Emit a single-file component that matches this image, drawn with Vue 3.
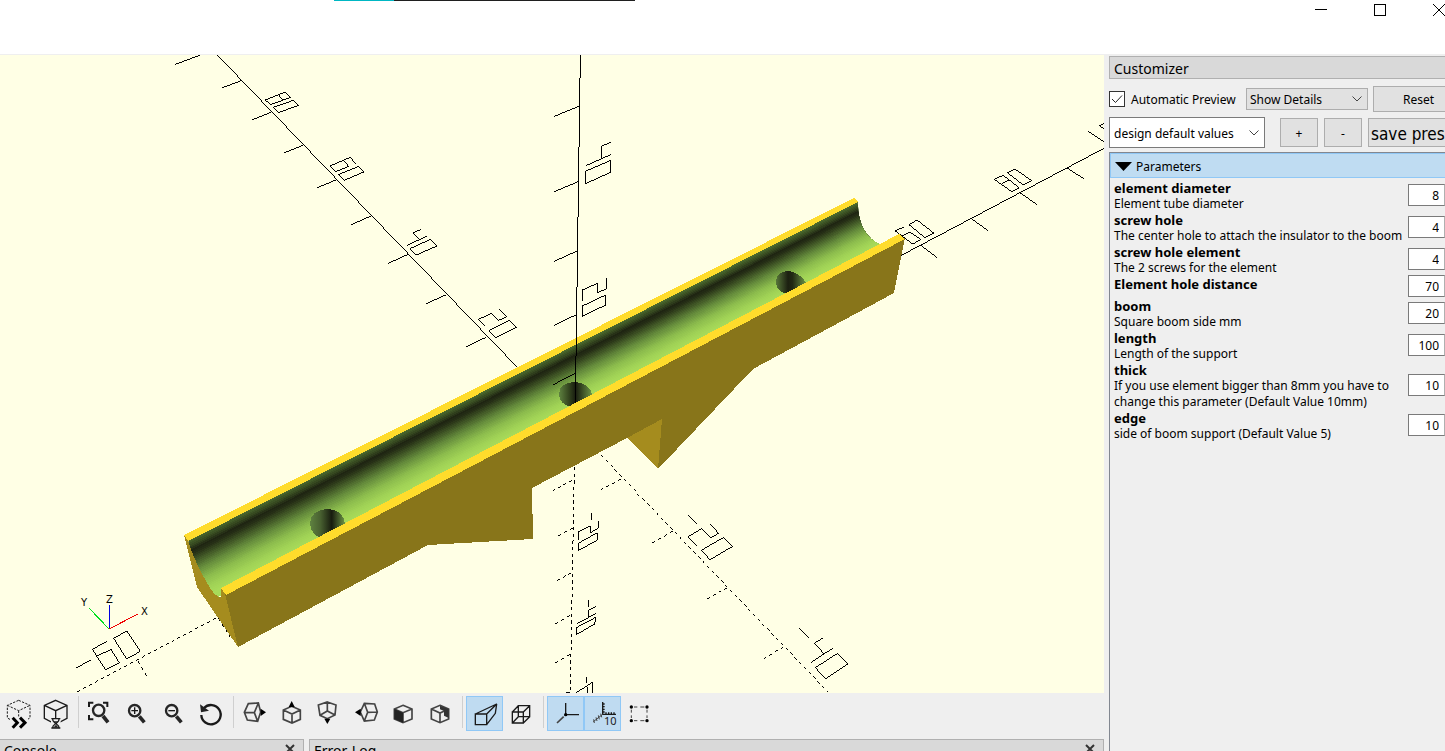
<script setup>
import { ref } from 'vue'

const autoPreview = ref(true)

const params = ref([
  { id: 'diameter', name: 'element diameter', text: 'Element tube diameter', value: 8 },
  { id: 'screw', name: 'screw hole', text: 'The center hole to attach the insulator to the boom', value: 4 },
  { id: 'screwel', name: 'screw hole element', text: 'The 2 screws for the element', value: 4 },
  { id: 'distance', name: 'Element hole distance', text: '', value: 70 },
  { id: 'boom', name: 'boom', text: 'Square boom side mm', value: 20 },
  { id: 'length', name: 'length', text: 'Length of the support', value: 100 },
  { id: 'thick', name: 'thick', text: 'If you use element bigger than 8mm you have to\nchange this parameter (Default Value 10mm)', value: 10 },
  { id: 'edge', name: 'edge', text: 'side of boom support (Default Value 5)', value: 10 },
])

// Shading of the groove: colour stops across its width, drawn as narrow facets
const stops = [
  [0, 78, 110, 47], [0.1, 54, 73, 32], [0.18, 31, 37, 18], [0.24, 38, 48, 22],
  [0.5, 99, 137, 59], [0.7, 140, 188, 77], [0.87, 161, 211, 86], [1, 169, 220, 91],
]
function shade(t) {
  let i = 1
  while (i < stops.length - 1 && stops[i][0] < t) i++
  const a = stops[i - 1]
  const b = stops[i]
  const k = (t - a[0]) / (b[0] - a[0])
  return `rgb(${[1, 2, 3].map((n) => Math.round(a[n] + (b[n] - a[n]) * k)).join(',')})`
}
const far = (x) => 540 - ((x - 188) * 338) / 670
const near = (x) => 589 - ((x - 221) * 355) / 679
const FACETS = 36
const facets = Array.from({ length: FACETS }, (_, i) => {
  const t = i / FACETS
  const at = (x, u) => `${x},${(far(x) + (near(x) - far(x)) * u).toFixed(1)}`
  return { points: `${at(170, t)} ${at(920, t)} ${at(920, 1.1)} ${at(170, 1.1)}`, fill: shade(t + 0.5 / FACETS) }
})
</script>

<template>
  <div class="window">
    <header class="titlebar">
      <div class="progress"><i class="done"></i><i class="rest"></i></div>
      <div class="controls">
        <button aria-label="Minimize"><svg viewBox="0 0 12 12"><path d="M0 5.5H12" /></svg></button>
        <button aria-label="Maximize"><svg viewBox="0 0 12 12"><path d="M.5 .5H11.5V11.5H.5Z" /></svg></button>
        <button aria-label="Close"><svg viewBox="0 0 12 12"><path d="M0 0L12 12M12 0L0 12" /></svg></button>
      </div>
    </header>

    <div class="body">
      <main class="left">
        <div class="viewport">
          <svg class="scene" viewBox="0 55 1104 638" preserveAspectRatio="xMinYMin slice" shape-rendering="crispEdges">
            <defs>
              <clipPath id="groove">
                <path d="M188 540L858 201C857 222 865 238 881 245L905 240L226 592L221 597C209 595 197 575 188 540Z" />
              </clipPath>
              <linearGradient id="holeL"><stop offset="0" stop-color="#5f8240" /><stop offset=".3" stop-color="#486030" /><stop offset=".62" stop-color="#181c0f" /><stop offset="1" stop-color="#6d9545" /></linearGradient>
              <linearGradient id="holeM"><stop offset="0" stop-color="#5f8240" /><stop offset=".3" stop-color="#34451f" /><stop offset=".5" stop-color="#181c0f" /><stop offset="1" stop-color="#6d9545" /></linearGradient>
              <linearGradient id="holeR"><stop offset="0" stop-color="#577639" /><stop offset=".4" stop-color="#1c2011" /><stop offset=".55" stop-color="#222a14" /><stop offset="1" stop-color="#6d9545" /></linearGradient>
            </defs>

            <g class="ink">
              <g transform="translate(170 50) scale(.33333)">
                <path d="M142 15L1041 951" />
                <path d="M16 43L89 16M157 113L214 92M247 209L303 187M343 308L399 286M442 413L500 389M544 524L603 498M655 640L714 613M769 761L829 734M889 890L948 862" />
                <path d="M286 150L346 126L362 142L302 164ZM324 133L340 151M310 172L370 151L386 166L325 188Z" />
                <path d="M556 341L541 322L480 348L497 365L536 349L520 331M505 374L566 349L581 366L523 391Z" />
                <path d="M753 538L730 549L749 568M711 586L770 559M720 596L781 568L801 588L739 615Z" />
                <path d="M945 827L926 808L964 790L986 811L1010 800L988 777M956 842L1019 811L1040 832L977 863Z" />
              </g>
              <g transform="translate(740 100) scale(.33333)">
                <path d="M484 466L1092 145" />
                <path d="M543 436L590 472M694 356L743 391M840 278L890 313M980 203L1031 236M1045 94L1092 126M1095 70L1078 77L1095 88" />
                <path d="M491 381L466 393L518 432L543 419L510 396L485 408M507 374L531 360L581 399L555 413Z" />
                <path d="M763 238L789 226L838 263L815 275ZM787 250L807 240M802 218L825 207L875 242L850 255Z" />
              </g>
              <g transform="translate(0 480) scale(.33333)">
                <path class="dash" d="M232 635L652 412M414 544L445 595M655 415L690 470" />
                <path d="M229 563L272 541M321 484L277 508L317 570L358 548L333 508L290 529M341 475L380 453L421 514L380 537Z" />
              </g>
              <g transform="translate(500 400) scale(.33333)">
                <path class="dash" d="M303 165L985 877" />
                <path class="dash" d="M223 201L211 877" />
                <path class="dash" d="M362 238L303 269M518 394L454 431M682 563L615 600M850 740L783 782M217 241L160 271M220 384L169 410M214 518L166 545M209 647L163 674M209 763L163 791M199 877H211" />
                <path d="M274 339V361M235 420V396L271 377V398L295 385V364M235 430L292 398V420L235 452Z" />
                <path d="M265 600V620M287 620L266 631V652M231 671L287 641M229 683L287 652L284 672L229 704Z" />
                <path d="M259 831V849M229 878L277 847V880M262 860V880" />
                <path d="M565 346L590 371M590 437L564 410L605 386L632 413L656 400L631 373M604 451L671 412L698 439L630 479Z" />
                <path d="M898 685L926 713M969 714L943 730L973 762M932 788L998 745M946 803L1013 760L1043 792L977 836Z" />
              </g>
            </g>

            <g clip-path="url(#groove)">
              <polygon v-for="(f, i) in facets" :key="i" :points="f.points" :fill="f.fill" />
            </g>
            <path fill="url(#holeL)" d="M310 523C310 514 318 509 328 509C338 509 345 516 345 524L325 540C316 537 310 532 310 523Z" />
            <path fill="url(#holeM)" d="M559 394C559 386 566 382 575 382C585 382 592 389 592 395L574 408C564 406 559 401 559 394Z" />
            <path fill="url(#holeR)" d="M776 282C776 275 781 271 788 271C795 271 803 277 806 283L788 294C781 293 776 289 776 282Z" />
            <path fill="#a58c1e" d="M184 535L197 587L238 647L226 594L221 588V597C217 597 214 594 210 588C201 573 192 555 188 540Z" />
            <path fill="#88751a" d="M225 594L905 238L894 293L753 369L658 469L640 440L627 438L532 488L533 539L428 545L238 647Z" />
            <path fill="#a58c1e" d="M627 438L662 419L658 469Z" />
            <path fill="#ffdc2c" d="M184 535L854 198L858 202L188 541Z" />
            <path fill="#ffdc2c" d="M221 588L899 234L905 239L226 595Z" />

            <g class="ink" transform="translate(530 50) scale(.33333)">
              <path d="M151 15L136 1058" />
              <path d="M73 199L151 167M73 425L147 394M73 634L143 602M73 826L139 794M70 1004L136 970" />
              <path d="M242 277L214 289V324M168 347L242 314M166 364L242 331V367L166 401Z" />
              <path d="M157 752V720L202 700V728L229 717V685M157 768L227 735V765L157 799Z" />
            </g>

            <g class="gizmo">
              <path stroke="#0000e0" d="M109.500 605V629" />
              <path stroke="#00e020" d="M89 608L109 629" />
              <path stroke="#f00000" d="M109 629L138 614" />
            </g>
            <g class="axis">
              <text x="81" y="606">Y</text>
              <text x="106" y="603">Z</text>
              <text x="141" y="615">X</text>
            </g>
          </svg>
        </div>

        <div class="toolbar" role="toolbar">
          <button aria-label="Preview"><svg viewBox="3 18 111 105">
            <path class="dot" d="M56 31L90 46V84L56 102L22 84V46ZM22 46L56 62L90 46M56 62V102" />
            <path fill="#efefef" stroke="none" d="M32 80H84V116H32Z" />
            <path class="chev" d="M38 83L52 98L38 113M60 83L75 98L60 113" />
          </svg></button>
          <button aria-label="Render"><svg viewBox="114 18 111 105">
            <path class="st" d="M167 31L201 46V85L167 103L133 85V46ZM133 46L167 62L201 46M167 62V86" />
            <path fill="#efefef" stroke="none" d="M153 84H182V116H153Z" />
            <path class="st" d="M154 86H181M154 114H181M158 88C158 98 166 97 166 101C166 105 158 104 158 113M177 88C177 98 169 97 169 101C169 105 177 104 177 113" />
            <path fill="#222" d="M159 94H176L168 100ZM160 113L168 104L176 113Z" />
          </svg></button>
          <span class="sep"></span>
          <button aria-label="View all"><svg viewBox="246 18 111 105">
            <path class="mid" d="M267 51V38H280M309 38H322V51M267 75V88H280" />
            <circle class="lens" cx="296" cy="61" r="17" /><path class="handle" d="M309 78L324 97" />
          </svg></button>
          <button aria-label="Zoom in"><svg viewBox="357 18 111 105">
            <circle class="lens" cx="404" cy="62" r="17" /><path class="handle" d="M418 79L433 97" />
            <path class="st" d="M394 62H414M404 52V72" />
          </svg></button>
          <button aria-label="Zoom out"><svg viewBox="468 18 111 105">
            <circle class="lens" cx="515" cy="62" r="17" /><path class="handle" d="M529 79L544 97" />
            <path class="st" d="M505 62H525" />
          </svg></button>
          <button aria-label="Reset view"><svg viewBox="579 18 111 105">
            <path class="arc" d="M612 54A29 29 0 1 1 604 75" /><path fill="#222" d="M600 43L603 67L627 62Z" />
          </svg></button>
          <span class="sep"></span>
          <button aria-label="Right"><svg viewBox="711 18 111 105">
            <path class="soft" d="M745 41L775 39L782 66L773 94L742 90L733 67ZM733 67L763 68L775 39M763 68L773 94" /><path d="M782 56L798 67L782 78Z" />
          </svg></button>
          <button aria-label="Top"><svg viewBox="822 18 111 105">
            <path class="soft" d="M875 49L901 60V88L876 99L850 88V60ZM850 60L876 72L901 60M876 72V99" /><path d="M875 33L884 51H866Z" />
          </svg></button>
          <button aria-label="Bottom"><svg viewBox="-27 18 111 105">
            <path class="soft" d="M22 36L48 45L45 75L22 86L0 76L-5 45ZM0 76L22 63L45 75M22 63V36" /><path d="M13 86H31L22 102Z" />
          </svg></button>
          <button aria-label="Left"><svg viewBox="84 18 111 105">
            <path class="soft" d="M133 40L164 42L172 66L163 90L133 93L121 66ZM133 40L143 67L133 93M143 67L172 66" /><path d="M105 67L122 56V78Z" />
          </svg></button>
          <button aria-label="Front"><svg viewBox="195 18 111 105">
            <path class="soft" d="M249 46L276 57V87L249 98L223 87V57ZM223 57L249 68L276 57M249 68V98" /><path fill="#222" d="M223 57L249 68V98L223 87Z" />
          </svg></button>
          <button aria-label="Back"><svg viewBox="306 18 111 105">
            <path class="soft" d="M360 46L386 57V87L360 98L334 87V57ZM334 57L360 69L386 57M360 69V98" /><path fill="#333" d="M360 47L386 57V84L372 77V63L360 58Z" />
          </svg></button>
          <span class="sep"></span>
          <button class="on" aria-label="Perspective" aria-pressed="true"><svg viewBox="438 18 111 105">
            <path class="st" d="M466 72H500V104H466ZM466 72L530 42L500 72M500 104L526 70L530 42" />
          </svg></button>
          <button aria-label="Orthogonal"><svg viewBox="549 18 111 105">
            <path class="st" d="M577 66H610V99H577ZM595 47H629V80H595ZM577 66L595 47M610 66L629 47M577 99L595 80M610 99L629 80" />
          </svg></button>
          <span class="sep"></span>
          <button class="on" aria-label="Show axes" aria-pressed="true"><svg viewBox="681 18 111 105">
            <path class="st" d="M737 74V39M737 74H777" /><path class="soft" d="M731 80L711 99" /><circle cx="737" cy="74" r="5" />
          </svg></button>
          <button class="on" aria-label="Show scale markers" aria-pressed="true"><svg viewBox="792 18 111 105">
            <path class="st" d="M848 36V73H888M848 42H854M848 50H854M848 58H854M848 66H854M858 73V67M866 73V67M874 73V67M882 73V67" />
            <path class="fine" d="M848 73L820 95M842 71L845 82M835 76L838 88M828 82L831 93M821 88L823 99" />
            <text x="852" y="105" font-size="33">10</text>
          </svg></button>
          <button aria-label="Show edges"><svg viewBox="903 18 111 105">
            <path class="fine" d="M942 51H952M961 51H973M942 92H952M961 92H973M934 59V68M934 76V84M981 59V68M981 76V84" />
            <circle cx="934" cy="51" r="5" /><circle cx="981" cy="51" r="5" /><circle cx="934" cy="92" r="5" /><circle cx="981" cy="92" r="5" />
          </svg></button>
        </div>

        <div class="docks">
          <section class="dock console"><h2>Console</h2>
            <button aria-label="Close console"><svg viewBox="0 0 10 10"><path d="M1 1L9 9M9 1L1 9" /></svg></button></section>
          <section class="dock errors"><h2>Error-Log</h2>
            <button aria-label="Close error log"><svg viewBox="0 0 10 10"><path d="M1 1L9 9M9 1L1 9" /></svg></button></section>
        </div>
      </main>

      <aside class="customizer">
        <h2 class="title">Customizer</h2>
        <div class="row one">
          <label class="auto">
            <input v-model="autoPreview" type="checkbox" />
            <svg class="tick" viewBox="0 0 16 16"><path d="M3 8L6.500 11.500L13 4.500" /></svg>
            <span>Automatic Preview</span>
          </label>
          <div class="combo details">
            <select aria-label="Detail level"><option>Show Details</option></select>
            <svg viewBox="0 0 10 6"><path d="M.5 .5L5 5L9.500 .5" /></svg>
          </div>
          <button class="btn reset">Reset</button>
        </div>
        <div class="row two">
          <div class="combo preset">
            <select aria-label="Preset"><option>design default values</option></select>
            <svg viewBox="0 0 10 6"><path d="M.5 .5L5 5L9.500 .5" /></svg>
          </div>
          <button class="btn small">+</button>
          <button class="btn small">-</button>
          <button class="btn save">save pres</button>
        </div>
        <div class="area">
          <button class="group"><svg viewBox="0 0 17 9"><path d="M0 0H17L8.500 9Z" /></svg>Parameters</button>
          <div class="params">
            <div v-for="p in params" :key="p.id" class="param">
              <label :for="p.id"><b>{{ p.name }}</b><span v-if="p.text">{{ p.text }}</span></label>
              <input :id="p.id" v-model="p.value" type="text" inputmode="numeric" />
            </div>
          </div>
        </div>
      </aside>
    </div>
  </div>
</template>

<style>
body { margin: 0; overflow: hidden; }
</style>

<style scoped>
* { box-sizing: border-box; }
.window {
  height: 100vh;
  display: flex;
  flex-direction: column;
  overflow: hidden;
  background: #efefef;
  color: #000;
  font: 12px/16px "Noto Sans", sans-serif;
}
button, select, input { font: inherit; color: inherit; margin: 0; border-radius: 0; }
button { border: 0; padding: 0; background: none; }
h2 { margin: 0; font: 14px/22px "Noto Sans", sans-serif; }

.titlebar { flex: none; height: 54px; background: #fff; display: flex; justify-content: space-between; }
.progress { display: flex; width: 635px; padding-left: 334px; height: 1px; }
.done { flex: 1; background: #00b7c3; }
.rest { flex: 4; background: #1f1f1f; }
.controls { display: flex; gap: 47px; padding-top: 4px; }
.controls button { width: 12px; height: 12px; }
.controls svg { display: block; width: 12px; height: 12px; fill: none; stroke: #000; shape-rendering: crispEdges; }

.body { flex: 1; min-height: 0; display: flex; gap: 5px; padding-top: 1px; }
.left { flex: 1; min-width: 0; display: flex; flex-direction: column; }
.viewport { flex: 1; min-height: 0; background: #ffffe5; overflow: hidden; }
.scene { display: block; width: 100%; height: 100%; }
.ink path { fill: none; stroke: #000; stroke-width: 3; }
.ink .dash { stroke-dasharray: 10 10; }
.gizmo path { fill: none; stroke-width: 1; }
.axis text { font: 10px "DejaVu Sans", sans-serif; fill: #000; }

.toolbar { flex: none; height: 46px; padding: 3px 1px; display: flex; }
.toolbar button { width: 37px; height: 35px; }
.toolbar svg { display: block; width: 37px; height: 35px; }
.toolbar .on { background: #bfdbf1; box-shadow: inset 0 0 0 1px #90c8f6; }
.toolbar text { font-family: "Noto Sans", sans-serif; fill: #222; }
.sep { width: 7px; height: 32px; background: linear-gradient(#cfcfcf, #cfcfcf) center / 1px 100% no-repeat; }
.st, .dot, .soft, .fine, .mid, .lens, .handle, .arc, .chev { fill: none; stroke: #1a1a1a; stroke-width: 4; }
.dot { stroke-dasharray: 7 4; stroke-width: 3; }
.soft { stroke: #444; stroke-width: 5; }
.fine { stroke: #444; stroke-width: 3; }
.mid { stroke-width: 6; }
.lens { stroke-width: 7; stroke: #262626; }
.handle { stroke-width: 11; stroke: #262626; }
.arc { stroke-width: 7; }
.chev { stroke: #000; stroke-width: 9; }

.docks { flex: none; height: 12px; overflow: hidden; display: flex; gap: 5px; }
.dock { height: 24px; display: flex; justify-content: space-between; background: #d9d9d9; border: 1px solid #b0b0b0; padding: 0 8px 0 4px; }
.console { width: 304px; border-left: 0; }
.errors { flex: 1; }
.dock button { width: 10px; height: 10px; margin-top: 4px; }
.dock svg { display: block; fill: none; stroke: #333; stroke-width: 2; }

.customizer { flex: none; width: 336px; display: flex; flex-direction: column; overflow: hidden; padding-top: 1px; }
.title { height: 23px; padding: 1px 0 0 4px; background: #d9d9d9; border: 1px solid #b0b0b0; border-right: 0; }
.row { display: flex; align-items: center; white-space: nowrap; }
.one { height: 26px; margin-top: 7px; }
.two { height: 31px; margin-top: 5px; }
.auto { position: relative; display: flex; align-items: center; gap: 6px; width: 137px; }
.auto input { appearance: none; width: 16px; height: 16px; border: 1px solid #333; background: #fff; }
.auto span { padding-top: 2px; }
.tick { position: absolute; left: 0; top: 1px; width: 16px; height: 16px; fill: none; stroke: #222; stroke-width: 1; visibility: hidden; }
.auto input:checked + .tick { visibility: visible; }
.combo { position: relative; }
.combo select { appearance: none; width: 100%; height: 100%; padding: 2px 3px 0; border: 1px solid #adadad; background: #e1e1e1; }
.combo svg { position: absolute; right: 6px; top: 50%; margin-top: -3px; width: 10px; height: 6px; fill: none; stroke: #444; pointer-events: none; }
.details { width: 122px; height: 22px; margin-right: 5px; }
.preset { width: 156px; height: 31px; margin-right: 15px; }
.combo.preset select { background: #fff; border-color: #7a7a7a; padding: 2px 4px 0; }
.btn { background: #e1e1e1; border: 1px solid #adadad; height: 29px; padding-top: 2px; }
.reset { flex: 1; height: 26px; border-right: 0; padding-left: 18px; }
.small { width: 38px; margin-right: 6px; }
.save { flex: 1; border-right: 0; font: 17px/24px "DejaVu Sans Condensed", "Noto Sans", sans-serif; text-align: left; padding-left: 2px; overflow: hidden; }
.area { flex: 1; margin-top: 4px; border: 1px solid #828790; border-width: 1px 0 0 1px; }
.group { width: 100%; height: 25px; display: flex; align-items: center; gap: 4px; padding: 3px 0 0 4px; background: #bfdcf2; border: 1px solid #90c8f6; border-right: 0; }
.group svg { width: 17px; height: 9px; margin-bottom: 2px; }
.params { padding: 1px 0 0 4px; }
.param { display: flex; align-items: center; justify-content: space-between; }
.param label { align-self: flex-start; white-space: pre; padding-top: 1px; margin-bottom: -1px; }
.param b, .param span { display: block; }
.param b { font-size: 13px; }
.param input { flex: none; width: 37px; height: 22px; padding: 0 5px 0 0; text-align: right; background: #fff; border: 1px solid #7a7a7a; border-right-color: #b0b0b0; }
</style>
